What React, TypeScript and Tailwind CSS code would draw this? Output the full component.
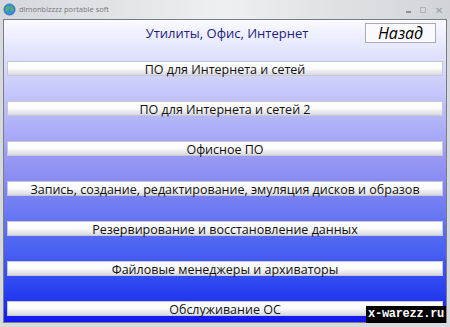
const items = [
  "ПО для Интернета и сетей",
  "ПО для Интернета и сетей 2",
  "Офисное ПО",
  "Запись, создание, редактирование, эмуляция дисков и образов",
  "Резервирование и восстановление данных",
  "Файловые менеджеры и архиваторы",
  "Обслуживание ОС",
];

export default function App() {
  return (
    <div
      className="w-[450px] h-[327px] flex flex-col bg-[#d6dade] overflow-hidden relative"
      style={{ fontFamily: "'Open Sans', 'Noto Sans', sans-serif" }}
    >
      {/* Title bar */}
      <div className="h-[19px] flex items-center px-[3px] bg-gradient-to-r from-[#d4d8dc] via-[#eef0f2] to-[#d0d4d8]">
        <svg width="13" height="13" viewBox="0 0 14 14" className="shrink-0">
          <circle cx="7" cy="7" r="6" fill="#3a8fd8" stroke="#2a5f9a" strokeWidth="0.8" />
          <path d="M3 5 Q5 3 7 4 Q8 6 6 7 Q4 8 4 10 Q2 8 3 5Z" fill="#5cb84a" />
          <path d="M9 3 Q11 5 11 8 Q9 9 8 7 Q9 5 9 3Z" fill="#5cb84a" />
        </svg>
        <span className="ml-[3px] text-[7.5px] text-[#777] leading-none">dimonbizzzz portable soft</span>
        <div className="ml-auto flex items-center gap-[9px] pr-[4px] text-[#9aa0a6] text-[9px] leading-none">
          <span className="w-[5px] h-[2px] bg-[#8a9096] mt-[4px]" />
          <span className="w-[6px] h-[6px] border border-[#b0b4b8]" />
          <span className="text-[10px]">✕</span>
        </div>
      </div>

      {/* Client area */}
      <div className="flex-1 mx-[3px] mb-[4px] border border-[#7a7e84] bg-gradient-to-b from-[#fafaff] via-[#9090f2] to-[#1414ee] flex flex-col">
        <div className="h-[41px] flex items-start relative">
          <div className="flex-1 text-center text-[13px] text-[#1e1e80] mt-[4px] pl-[4px]">Утилиты, Офис, Интернет</div>
          <button className="absolute left-[361px] top-[3px] w-[71px] h-[20px] bg-[#fbfbff] border border-[#a8aab4] italic text-[16px] leading-none text-black">
            Назад
          </button>
        </div>
        <div className="flex flex-col gap-[25px] px-[3px]">
          {items.map((t) => (
            <div
              key={t}
              className="h-[15px] bg-gradient-to-b from-white via-[#fbfbfb] to-[#d8d8e0] border border-[#c8c8d4] text-center text-[12.5px] leading-[15px] text-[#111]"
            >
              {t}
            </div>
          ))}
        </div>
      </div>

      {/* Watermark */}
      <div className="absolute right-[4px] bottom-[4px] bg-black px-[2px] text-white font-bold text-[12px] leading-[17px] tracking-tight" style={{ fontFamily: "'Liberation Mono', monospace" }}>
        x-warezz.ru
      </div>
    </div>
  );
}
